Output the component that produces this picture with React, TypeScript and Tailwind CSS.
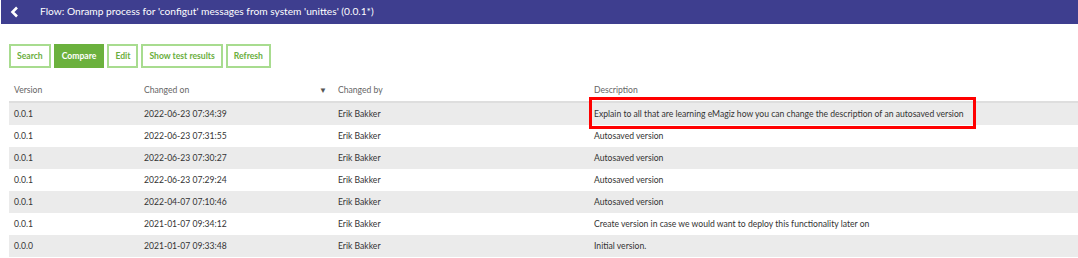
import React from "react";

const rows = [
  { v: "0.0.1", on: "2022-06-23 07:34:39", desc: "Explain to all that are learning eMagiz how you can change the description of an autosaved version" },
  { v: "0.0.1", on: "2022-06-23 07:31:55", desc: "Autosaved version" },
  { v: "0.0.1", on: "2022-06-23 07:30:27", desc: "Autosaved version" },
  { v: "0.0.1", on: "2022-06-23 07:29:24", desc: "Autosaved version" },
  { v: "0.0.1", on: "2022-04-07 07:10:46", desc: "Autosaved version" },
  { v: "0.0.1", on: "2021-01-07 09:34:12", desc: "Create version in case we would want to deploy this functionality later on" },
  { v: "0.0.0", on: "2021-01-07 09:33:48", desc: "Initial version." },
];

const buttons = ["Search", "Compare", "Edit", "Show test results", "Refresh"];

export default function App() {
  return (
    <div className="w-[1078px] h-[258px] bg-white overflow-hidden font-['Lato',sans-serif]">
      {/* Title bar */}
      <div className="ml-px h-6 bg-[#3e3e8f] flex items-center text-white">
        <svg width="10" height="12" viewBox="0 0 10 12" className="ml-[9px]">
          <path d="M7 1.5 L2.5 6 L7 10.5" stroke="white" strokeWidth="2.6" fill="none" strokeLinejoin="miter" />
        </svg>
        <span className="ml-[20px] text-[10.2px]">
          Flow: Onramp process for 'configut' messages from system 'unittes' (0.0.1*)
        </span>
      </div>

      {/* Buttons */}
      <div className="flex gap-[3px] ml-[9px] mt-5">
        {buttons.map((b) => (
          <div
            key={b}
            className={
              b === "Compare"
                ? "h-6 px-[6px] flex items-center border-2 border-[#6bb13d] bg-[#6bb13d] text-white text-[8.6px] font-bold"
                : "h-6 px-[6px] flex items-center border-2 border-[#a8dc8f] bg-white text-[#6aae3d] text-[8.6px] font-bold"
            }
          >
            {b}
          </div>
        ))}
      </div>

      {/* Table */}
      <div className="ml-[9px] mt-3 text-[8.6px]">
        <div className="grid grid-cols-[130px_194px_256px_1fr] h-[23px] items-center text-[#666] border-b-2 border-[#dedede]">
          <div className="pl-[5px]">Version</div>
          <div className="pl-[5px] flex items-center">
            <span>Changed on</span>
            <span className="ml-auto mr-[6px] text-[8px] text-[#555]">▼</span>
          </div>
          <div className="pl-[5px]">Changed by</div>
          <div className="pl-[5px]">Description</div>
        </div>
        {rows.map((r, i) => (
          <div
            key={i}
            className={
              "grid grid-cols-[130px_194px_256px_1fr] h-[22px] items-center text-[#333] " +
              (i % 2 === 0 ? "bg-[#ebebeb]" : "bg-white")
            }
          >
            <div className="pl-[5px]">{r.v}</div>
            <div className="pl-[5px]">{r.on}</div>
            <div className="pl-[5px]">Erik Bakker</div>
            <div className="pl-[5px] relative">
              {r.desc}
              {i === 0 && (
                <div className="absolute left-0 top-[-11px] w-[387px] h-[32px] border-[3px] border-[#ff0000]" />
              )}
            </div>
          </div>
        ))}
      </div>
    </div>
  );
}
